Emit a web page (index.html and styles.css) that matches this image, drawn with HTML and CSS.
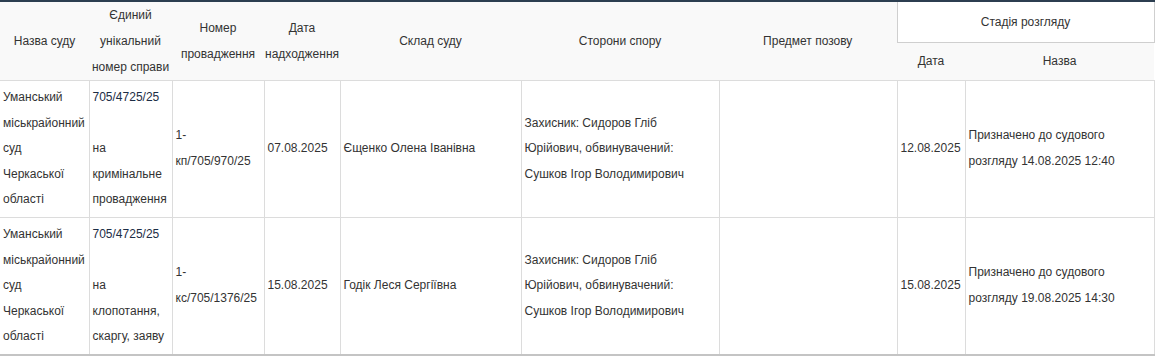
FILE: index.html
```html
<!DOCTYPE html>
<html lang="uk">
<head>
<meta charset="utf-8">
<title>Справи</title>
<link rel="stylesheet" href="styles.css">
</head>
<body>
<table class="cases">
  <colgroup>
    <col class="c1"><col class="c2"><col class="c3"><col class="c4"><col class="c5">
    <col class="c6"><col class="c7"><col class="c8"><col class="c9">
  </colgroup>
  <thead>
    <tr class="h1">
      <th rowspan="2">Назва суду</th>
      <th rowspan="2">Єдиний унікальний номер справи</th>
      <th rowspan="2">Номер провадження</th>
      <th rowspan="2">Дата надходження</th>
      <th rowspan="2">Склад суду</th>
      <th rowspan="2">Сторони спору</th>
      <th rowspan="2">Предмет позову</th>
      <th colspan="2" class="stage">Стадія розгляду</th>
    </tr>
    <tr class="h2">
      <th>Дата</th>
      <th>Назва</th>
    </tr>
  </thead>
  <tbody>
    <tr>
      <td>Уманський міськрайонний суд Черкаської області</td>
      <td><a class="case-link" href="#">705/4725/25</a><br><br>на кримінальне провадження</td>
      <td>1-кп/705/970/25</td>
      <td>07.08.2025</td>
      <td>Єщенко Олена Іванівна</td>
      <td>Захисник: Сидоров Гліб Юрійович, обвинувачений: Сушков Ігор Володимирович</td>
      <td></td>
      <td>12.08.2025</td>
      <td>Призначено до судового розгляду 14.08.2025 12:40</td>
    </tr>
    <tr>
      <td>Уманський міськрайонний суд Черкаської області</td>
      <td><a class="case-link" href="#">705/4725/25</a><br><br>на клопотання, скаргу, заяву</td>
      <td>1-кс/705/1376/25</td>
      <td>15.08.2025</td>
      <td>Годік Леся Сергіївна</td>
      <td>Захисник: Сидоров Гліб Юрійович, обвинувачений: Сушков Ігор Володимирович</td>
      <td></td>
      <td>15.08.2025</td>
      <td>Призначено до судового розгляду 19.08.2025 14:30</td>
    </tr>
  </tbody>
</table>
</body>
</html>
```

FILE: styles.css
```css
html, body {
  margin: 0;
  padding: 0;
  background: #fff;
}

body {
  font-family: "Liberation Sans", Arial, sans-serif;
  font-size: 12px;
  color: #333;
}

.cases {
  width: 1154px;
  table-layout: fixed;
  border-collapse: collapse;
  border-top: 2px solid #2c3e50;
  border-bottom: 2px solid #c4c4c4;
}

.c1 { width: 89px; }
.c2 { width: 83px; }
.c3 { width: 92px; }
.c4 { width: 76px; }
.c5 { width: 181px; }
.c6 { width: 198px; }
.c7 { width: 178px; }
.c8 { width: 68px; }
.c9 { width: 189px; }

.cases th {
  background: #f9f9f9;
  font-weight: normal;
  text-align: center;
  vertical-align: middle;
  line-height: 26px;
  padding: 0 1px;
  border-bottom: 1px solid #dcdcdc;
}

.cases .h1 {
  height: 41px;
}

.cases th.stage {
  background: #fff;
  border: 1px solid #cfcfcf;
}

.cases td {
  vertical-align: middle;
  text-align: left;
  line-height: 25.6px;
  padding: 4px 3px;
  border-left: 1px solid #dcdcdc;
  border-right: 1px solid #dcdcdc;
  border-bottom: 1px solid #dcdcdc;
  word-wrap: break-word;
}

.cases td:first-child {
  border-left: none;
}

.cases tbody tr:last-child td {
  border-bottom: 2px solid #c4c4c4;
}

.case-link {
  color: #1c2d45;
  text-decoration: none;
}
```
